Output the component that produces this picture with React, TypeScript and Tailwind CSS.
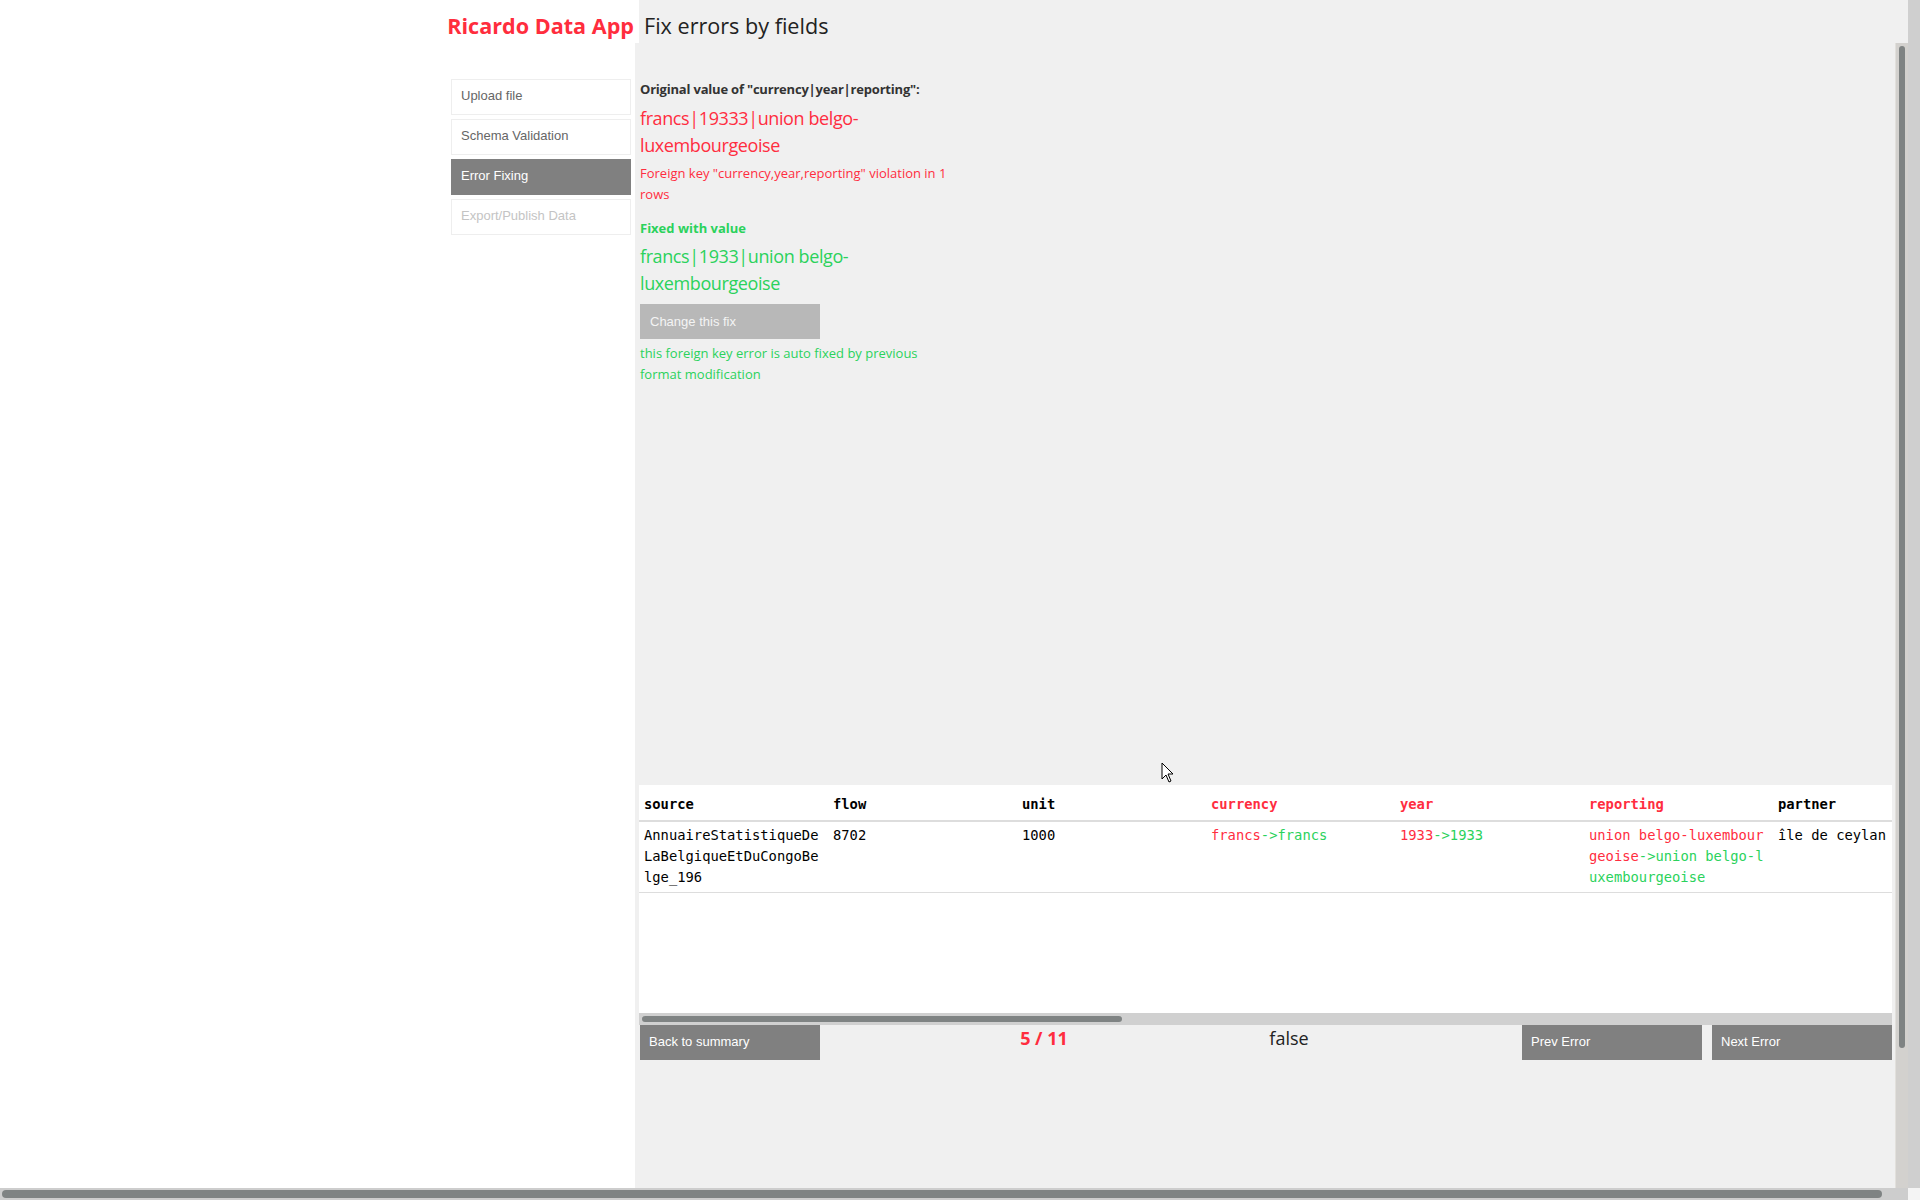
import { Fragment } from "react";

type Column = {
  readonly key: string;
  readonly label: string;
  readonly error?: boolean;
};

type Fix = { readonly from: string; readonly to: string };

const columns: readonly Column[] = [
  { key: "source", label: "source" },
  { key: "flow", label: "flow" },
  { key: "unit", label: "unit" },
  { key: "currency", label: "currency", error: true },
  { key: "year", label: "year", error: true },
  { key: "reporting", label: "reporting", error: true },
  { key: "partner", label: "partner" },
];

const row: Record<string, string | Fix> = {
  source: "AnnuaireStatistiqueDeLaBelgiqueEtDuCongoBelge_196",
  flow: "8702",
  unit: "1000",
  currency: { from: "francs", to: "francs" },
  year: { from: "1933", to: "1933" },
  reporting: { from: "union belgo-luxembourgeoise", to: "union belgo-luxembourgeoise" },
  partner: "île de ceylan",
};

const menu = [
  { label: "Upload file", state: "done" },
  { label: "Schema Validation", state: "done" },
  { label: "Error Fixing", state: "active" },
  { label: "Export/Publish Data", state: "disabled" },
] as const;

const ubuntu = "font-['Open_Sans','Noto_Sans',sans-serif]";
const arial = "font-['Liberation_Sans',Arial,sans-serif]";
const mono = "font-['DejaVu_Sans_Mono',monospace]";

function Sidebar() {
  return (
    <nav className="flex w-[635px] shrink-0 flex-col items-end gap-[4px] bg-white pt-[36px] pr-[4px]">
      {menu.map((item) => (
        <div
          key={item.label}
          className={[
            "h-[36px] w-[180px] border px-[9px] text-[13px] leading-[32px]",
            arial,
            item.state === "active"
              ? "border-[#808080] bg-[#808080] text-white"
              : item.state === "disabled"
                ? "border-[#eeeeee] bg-white text-[#c4c4c4]"
                : "border-[#eeeeee] bg-white text-[#666666]",
          ].join(" ")}
        >
          {item.label}
        </div>
      ))}
    </nav>
  );
}

function ErrorInfo() {
  return (
    <div className={`ml-px w-[318px] ${ubuntu}`}>
      <p className="text-[13px] leading-[20px] font-bold tracking-[-0.2px] text-[#333333]">
        Original value of "currency|year|reporting":
      </p>
      <p className="mt-[6px] text-[18px] leading-[27px] tracking-[-0.4px] text-[#ff2d3f]">
        francs|19333|union belgo-luxembourgeoise
      </p>
      <p className="mt-[4px] text-[13px] leading-[21px] text-[#ff2d3f]">
        Foreign key "currency,year,reporting" violation in 1 rows
      </p>
      <p className="mt-[13px] text-[13px] leading-[21px] font-bold text-[#2bd25c]">
        Fixed with value
      </p>
      <p className="mt-[4px] text-[18px] leading-[27px] tracking-[-0.4px] text-[#2bd25c]">
        francs|1933|union belgo-luxembourgeoise
      </p>
      <button
        type="button"
        className={`mt-[7px] block h-[35px] w-[180px] bg-[#b8b8b8] px-[10px] text-left text-[13px] text-[#f4f4f4] ${arial}`}
      >
        Change this fix
      </button>
      <p className="mt-[4px] text-[13px] leading-[21px] text-[#2bd25c]">
        this foreign key error is auto fixed by previous format modification
      </p>
    </div>
  );
}

function Cell({ value, error }: { value: string | Fix; error?: boolean }) {
  if (typeof value === "string") {
    return <span className="text-black">{value}</span>;
  }
  return (
    <Fragment>
      <span className={error ? "text-[#ff2d3f]" : "text-black"}>{value.from}</span>
      <span className="text-[#2bd25c]">-&gt;{value.to}</span>
    </Fragment>
  );
}

function ErrorTable() {
  return (
    <div className="w-[1253px] overflow-hidden bg-white">
      <div className="h-[228px] overflow-hidden">
        <table className={`w-[1323px] table-fixed border-collapse text-[13.8px] ${mono}`}>
          <thead>
            <tr className="border-b-2 border-[#dddddd]">
              {columns.map((col) => (
                <th
                  key={col.key}
                  className={[
                    "w-[189px] px-[5px] pt-[9px] pb-[5px] text-left leading-[21px] font-bold",
                    col.error ? "text-[#ff2d3f]" : "text-black",
                  ].join(" ")}
                >
                  {col.label}
                </th>
              ))}
            </tr>
          </thead>
          <tbody>
            <tr className="border-b border-[#dddddd]">
              {columns.map((col) => (
                <td
                  key={col.key}
                  className="w-[189px] px-[5px] pt-[3px] pb-[4px] align-top leading-[21px] break-all"
                >
                  <Cell value={row[col.key]} error={col.error} />
                </td>
              ))}
            </tr>
          </tbody>
        </table>
      </div>
      <div className="flex h-[12px] items-center bg-[#d0d0d0] px-[3px]">
        <div className="h-[6px] w-[480px] rounded-full bg-[#7f8383]" />
      </div>
    </div>
  );
}

function Pager() {
  return (
    <div className={`flex h-[35px] w-[1253px] items-start ${arial}`}>
      <button
        type="button"
        className="ml-px h-[35px] w-[180px] bg-[#808080] px-[9px] pb-[2px] text-left text-[13px] text-white"
      >
        Back to summary
      </button>
      <p className={`ml-[124px] w-[200px] text-center text-[18px] leading-[27px] font-bold text-[#ff2d3f] ${ubuntu}`}>
        5 / 11
      </p>
      <p className={`ml-[45px] w-[200px] text-center text-[18px] leading-[27px] text-[#222222] ${ubuntu}`}>
        false
      </p>
      <button
        type="button"
        className="ml-auto h-[35px] w-[180px] bg-[#808080] px-[9px] pb-[2px] text-left text-[13px] text-white"
      >
        Prev Error
      </button>
      <button
        type="button"
        className="ml-[10px] h-[35px] w-[180px] bg-[#808080] px-[9px] pb-[2px] text-left text-[13px] text-white"
      >
        Next Error
      </button>
    </div>
  );
}

function Cursor() {
  return (
    <svg
      aria-hidden="true"
      className="absolute top-[762px] left-[1161px]"
      width="14"
      height="22"
      viewBox="0 0 14 22"
    >
      <path
        d="M1 1 L1 17 L5 13 L8 20 L10 19 L7 12 L12 12 Z"
        fill="#ffffff"
        stroke="#000000"
        strokeWidth="1"
        strokeLinejoin="round"
      />
    </svg>
  );
}

export default function App() {
  return (
    <div className="relative flex h-[1200px] w-[1920px] flex-col overflow-hidden bg-[#f0f0f0]">
      <div className="flex h-[1188px]">
        <div className="flex w-[1908px] flex-col">
          <header className="flex h-[43px] shrink-0 items-center">
            <div className="flex h-full w-[639px] items-center justify-end bg-white pt-[10px] pr-[5px]">
              <h1 className={`text-[21.6px] font-bold text-[#ff2d3d] ${ubuntu}`}>Ricardo Data App</h1>
            </div>
            <h2 className={`ml-[5px] pt-[10px] text-[21.6px] text-[#222222] ${ubuntu}`}>
              Fix errors by fields
            </h2>
          </header>

          <div className="flex min-h-0 flex-1">
            <Sidebar />

            <main className="flex min-w-0 flex-1">
              <div className="flex flex-1 flex-col pt-[36px] pr-[3px] pl-[4px]">
                <div className="h-[706px] shrink-0">
                  <ErrorInfo />
                </div>
                <ErrorTable />
                <Pager />
              </div>

              <div className="w-[13px] border-l border-[#e2e0dc] bg-[#d3d1ce] pt-[3px]">
                <div className="mx-auto h-[1002px] w-[6px] rounded-full bg-[#7f8383]" />
              </div>
            </main>
          </div>
        </div>
        <div className="w-[12px] bg-[#cfcfcf]" />
      </div>

      <div className="flex h-[12px]">
        <div className="flex w-[1908px] items-center bg-[#cdcdcd] px-[2px]">
          <div className="h-[8px] w-[1880px] rounded-full bg-[#7f8383]" />
        </div>
        <div className="w-[12px] bg-[#f4f4f4]" />
      </div>

      <Cursor />
    </div>
  );
}
